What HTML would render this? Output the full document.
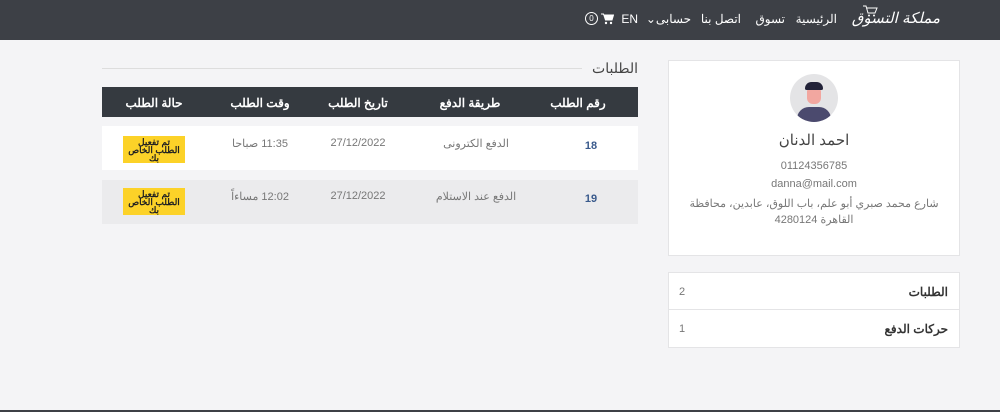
<!DOCTYPE html>
<html><head><meta charset="utf-8"><style>
*{margin:0;padding:0;box-sizing:border-box}
body{width:1000px;height:412px;background:#f4f4f6;font-family:"Liberation Sans","Noto Sans CJK SC",sans-serif;position:relative;overflow:hidden;color:#555}
.a{position:absolute}
.nav{left:0;top:0;width:1000px;height:40px;background:#3d4046;color:#fff;font-size:12px}
.nav span{position:absolute;top:12px;white-space:nowrap;direction:rtl}
.th{left:102px;top:87px;width:536px;height:30px;background:#353a40;color:#fff;font-size:12px;font-weight:bold}
.th span,.row span{position:absolute;transform:translateX(-50%);white-space:nowrap;direction:rtl}
.row{left:102px;width:536px;height:44px;font-size:11px;color:#777}
.badge{position:absolute;left:21px;width:62px;height:27px;background:#fcd228;color:#222;font-size:9px;line-height:8px;text-align:center;padding-top:2px;font-weight:bold;direction:rtl;overflow:hidden;white-space:nowrap}
.card{background:#fff;border:1px solid #e4e4e6}
</style></head><body>
<div class="a nav">
<span style="right:60px;top:9px;font-size:15px;font-style:italic">مملكة التسوق</span>
<svg class="a" style="left:862px;top:5px" width="16" height="12" viewBox="0 0 16 12"><path d="M1 1h3l2 7h7l2-5H5" fill="none" stroke="#fff" stroke-width="1"/><circle cx="7" cy="10.5" r="1" fill="#fff"/><circle cx="12" cy="10.5" r="1" fill="#fff"/></svg>
<span style="right:163px">الرئيسية</span>
<span style="right:215px">تسوق</span>
<span style="right:259px">اتصل بنا</span>
<span style="right:309px">حسابى⌄</span>
<span style="right:362px">EN</span>
<svg class="a" style="left:601px;top:13px" width="13" height="12" viewBox="0 0 13 12"><path d="M0 1h2.5l2 6h6.5l1.5-5H3" fill="#fff" stroke="#fff"/><circle cx="5" cy="10" r="1.2" fill="#fff"/><circle cx="10" cy="10" r="1.2" fill="#fff"/></svg>
<div class="a" style="left:585px;top:12px;width:13px;height:13px;border:1px solid #fff;border-radius:50%;font-size:8px;text-align:center;line-height:11px">0</div>
</div>
<div class="a" style="right:362px;top:60px;font-size:14px;color:#444">الطلبات</div>
<div class="a" style="left:102px;top:68px;width:480px;border-top:1px solid #ddd"></div>
<div class="a th"><span style="left:476px;top:9px">رقم الطلب</span><span style="left:368px;top:9px">طريقة الدفع</span><span style="left:256px;top:9px">تاريخ الطلب</span><span style="left:158px;top:9px">وقت الطلب</span><span style="left:52px;top:9px">حالة الطلب</span></div>
<div class="a row" style="top:126px;background:#fff"><span style="left:489px;top:14px;color:#3a5a8c;font-weight:bold">18</span><span style="left:374px;top:11px">الدفع الكترونى</span><span style="left:256px;top:11px">27/12/2022</span><span style="left:158px;top:11px">11:35 صباحا</span><div class="badge" style="top:10px">تم تفعيل<br>الطلب الخاص<br>بك</div></div>
<div class="a row" style="top:180px;background:#ebebed"><span style="left:489px;top:13px;color:#3a5a8c;font-weight:bold">19</span><span style="left:374px;top:10px">الدفع عند الاستلام</span><span style="left:256px;top:10px">27/12/2022</span><span style="left:158px;top:10px">12:02 مساءاً</span><div class="badge" style="top:8px">تم تفعيل<br>الطلب الخاص<br>بك</div></div>
<div class="a card" style="left:668px;top:60px;width:292px;height:196px;text-align:center">
<div class="a" style="left:121px;top:13px;width:48px;height:48px;border-radius:50%;background:#e4e4e6;overflow:hidden">
<div class="a" style="left:7px;top:33px;width:34px;height:20px;border-radius:12px 12px 0 0;background:#4b4a6e"></div>
<div class="a" style="left:17px;top:12px;width:14px;height:18px;border-radius:6px;background:#f2a7a0"></div>
<div class="a" style="left:15px;top:8px;width:18px;height:8px;border-radius:8px 8px 2px 2px;background:#222238"></div>
</div>
<div class="a" style="left:0;width:290px;top:70px;font-size:15px;color:#444">احمد الدنان</div>
<div class="a" style="left:0;width:290px;top:99px;font-size:11px;color:#777">01124356785</div>
<div class="a" style="left:0;width:290px;top:117px;font-size:11px;color:#777">danna@mail.com</div>
<div class="a" style="left:0;width:290px;top:135px;font-size:11px;line-height:16px;color:#777;direction:rtl;white-space:nowrap;text-align:center">شارع محمد صبري أبو علم، باب اللوق، عابدين، محافظة<br>القاهرة 4280124</div>
</div>
<div class="a card" style="left:668px;top:272px;width:292px;height:76px">
<div class="a" style="left:0;top:36px;width:290px;border-top:1px solid #e4e4e6"></div>
<div class="a" style="right:11px;top:12px;font-size:12px;font-weight:bold;color:#333">الطلبات</div>
<div class="a" style="left:10px;top:13px;font-size:11px;color:#777">2</div>
<div class="a" style="right:11px;top:49px;font-size:12px;font-weight:bold;color:#333">حركات الدفع</div>
<div class="a" style="left:10px;top:50px;font-size:11px;color:#777">1</div>
</div>
<div class="a" style="left:0;top:410px;width:1000px;height:2px;background:#3d4046"></div>
</body></html>
